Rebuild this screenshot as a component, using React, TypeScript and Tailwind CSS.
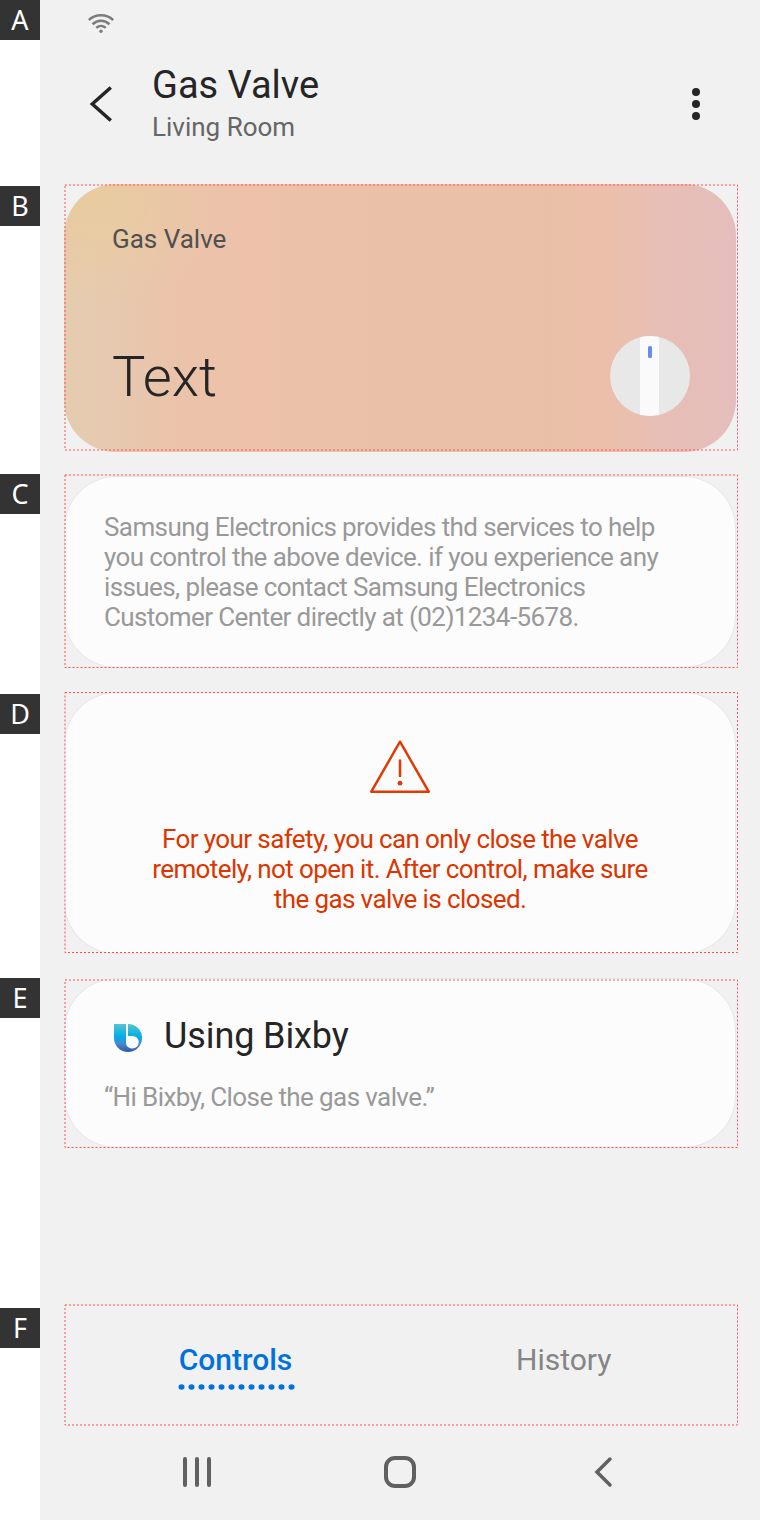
import type { ReactNode } from "react";

function Frame({ className, y = 1, height }: { className: string; y?: number; height: number }) {
  return (
    <svg className={"pointer-events-none absolute left-0 " + className} width="676" height={height + 4} fill="none">
      <rect x="1" y={y} width="672.5" height={height} stroke="#ff5050" strokeDasharray="2 2" />
    </svg>
  );
}

function Badge({ letter }: { letter: string }) {
  return (
    <div className="flex h-10 w-10 items-center justify-center bg-[#333333] font-['Noto_Sans',sans-serif] text-[27px] leading-10 text-white">
      {letter}
    </div>
  );
}

function Card({ className, children }: { className: string; children: ReactNode }) {
  return (
    <div className={"w-[672px] rounded-[52px] bg-[#fcfcfc] shadow-[inset_0_0_0_1px_#e6e6e6] " + className}>
      {children}
    </div>
  );
}

export default function App() {
  return (
    <div className="flex h-[1520px] w-[760px] bg-white font-[Roboto,sans-serif]">
      <aside className="flex w-10 flex-col">
        <Badge letter="A" />
        <div className="h-[146px]" />
        <Badge letter="B" />
        <div className="h-[248px]" />
        <Badge letter="C" />
        <div className="h-[180px]" />
        <Badge letter="D" />
        <div className="h-[244px]" />
        <Badge letter="E" />
        <div className="h-[290px]" />
        <Badge letter="F" />
      </aside>

      <main className="flex w-[720px] flex-col bg-[#f1f1f1] pl-6">
        <div className="h-12 pt-3 pl-6">
          <svg width="26" height="22" viewBox="0 0 26 22" fill="none" stroke="#7c7c7c" strokeWidth="2.600">
            <path d="M.8 8C7.800 1.700 18.200 1.700 25.200 8M4.500 12.200C9.500 7.500 16.500 7.500 21.500 12.200M8.300 15.900C11 13.300 15 13.300 17.700 15.900" />
            <circle cx="13" cy="19.300" r="1.700" fill="#7c7c7c" stroke="none" />
          </svg>
        </div>

        <header className="flex h-[136px] items-start pr-[60px]">
          <svg className="mt-[37px] ml-6" width="26" height="38" fill="none" stroke="#252525" strokeWidth="3.500">
            <path d="M22.800 2.500L4.300 19L22.800 35.500" />
          </svg>
          <div className="ml-[38px] flex-1 pt-3">
            <h1 className="text-[38px] leading-[50px] text-[#252525]">Gas Valve</h1>
            <p className="text-[26px] leading-[34px] text-[#666]">Living Room</p>
          </div>
          <svg className="mt-[38px]" width="8" height="36" fill="#252525">
            <circle cx="4" cy="6" r="4" />
            <circle cx="4" cy="18" r="4" />
            <circle cx="4" cy="30" r="4" />
          </svg>
        </header>

        <section className="relative h-[291px]">
          <div className="flex h-[268px] w-[672px] flex-col justify-between rounded-[52px] bg-[radial-gradient(ellipse_130px_110px_at_30px_15px,#e9cb9f_0%,#e9caa2b0_45%,#ebc5a600_100%),linear-gradient(90deg,#e4ccb0_0px,#e6c9b0_50px,#ebc3aa_110px,#edc1aa_180px,#eac1a8_330px,#eabfa7_490px,#ecbfab_545px,#e7bfb6_600px,#e5bdbc_672px)] pt-[38px] pr-[46px] pb-9 pl-12">
            <p className="text-[26px] leading-[34px] text-[#505050]">Gas Valve</p>
            <div className="flex items-end justify-between">
              <p className="text-[56px] leading-[78px] font-light text-[#252525]">Text</p>
              <svg width="80" height="80">
                <clipPath id="knob"><circle cx="40" cy="40" r="40" /></clipPath>
                <g clipPath="url(#knob)">
                  <rect width="80" height="80" fill="#e8e8e8" />
                  <rect x="30" width="19" height="80" fill="#fafafa" />
                </g>
                <rect x="38" y="10" width="4" height="12" rx="1.500" fill="#668cec" />
              </svg>
            </div>
          </div>
          <Frame className="top-0" height={265} />
        </section>

        <section className="relative h-[217px] pt-px">
          <Card className="h-[192px] pt-9 pl-10 text-[26px] leading-[30px] tracking-[-0.600px] text-[#999]">
            <p>Samsung Electronics provides thd services to help<br />you control the above device. if you experience any<br />issues, please contact Samsung Electronics<br />Customer Center directly at (02)1234-5678.</p>
          </Card>
          <Frame className="-top-px" height={192.500} />
        </section>

        <section className="relative h-[286px]">
          <Card className="flex h-[262px] flex-col items-center pt-12 text-center text-[26px] leading-[30px] tracking-[-0.600px] text-[#dc3500]">
            <svg width="60" height="54" fill="none" stroke="#e23a03" strokeWidth="2.500" strokeLinejoin="round">
              <path d="M30 1.700L58.700 51.700H1.300Z" />
              <path d="M30 19.500V37" />
              <circle cx="30" cy="43.200" r="2.400" fill="#e23a03" stroke="none" />
            </svg>
            <p className="mt-[30px]">For your safety, you can only close the valve<br />remotely, not open it. After control, make sure<br />the gas valve is closed.</p>
          </Card>
          <Frame className="top-0" y={0.5} height={260} />
        </section>

        <section className="relative h-[326px]">
          <Card className="h-[170px] pt-[33px] pl-10">
            <div className="flex h-[50px] items-start pl-[10px]">
              <svg className="mt-[13px]" width="28" height="28" viewBox="0 0 28 28">
                <linearGradient id="bixby" x1="0" y1="0" x2="0" y2="28" gradientUnits="userSpaceOnUse">
                  <stop stopColor="#55c5cb" />
                  <stop offset=".45" stopColor="#00aeea" />
                  <stop offset=".7" stopColor="#438bcc" />
                  <stop offset="1" stopColor="#3656a8" />
                </linearGradient>
                <path fill="url(#bixby)" fillRule="evenodd" d="M0 0H12V18A6 6 0 0 0 18.500 24.500A6.200 6.200 0 0 0 18.500 12H14V0A14 14 0 0 1 14 28A14 14 0 0 1 0 14Z" />
              </svg>
              <h2 className="ml-[22px] text-[36px] leading-[50px] tracking-[-0.100px] text-[#252525]">Using Bixby</h2>
            </div>
            <p className="mt-[21px] text-[26px] leading-[30px] tracking-[-0.600px] text-[#999]">“Hi Bixby, Close the gas valve.”</p>
          </Card>
          <Frame className="top-px" height={167.500} />
        </section>

        <nav className="relative flex h-[122px] pr-5 pt-9 text-[30px] leading-[40px]">
          <div className="ml-[113px] flex w-[120px] flex-col items-center">
            <span className="mr-[3px] font-medium text-[#0072de]">Controls</span>
            <svg width="118" height="6" fill="#0072de" className="mt-1">
              {Array.from({ length: 12 }, (_, i) => (
                <ellipse key={i} cx={3.5 + i * 10} cy="3" rx="3" ry="2.700" />
              ))}
            </svg>
          </div>
          <span className="ml-[219px] text-[#858585]">History</span>
          <Frame className="top-0" height={120} />
        </nav>

        <footer className="flex h-[94px] items-start pt-[30px] pl-[118px]">
          <svg width="30" height="32" stroke="#606060" strokeWidth="4" strokeLinecap="round">
            <path d="M3 3V29M15 3V29M27 3V29" />
          </svg>
          <svg className="ml-[172px]" width="32" height="32" fill="none" stroke="#606060" strokeWidth="4">
            <rect x="2" y="2" width="28" height="28" rx="9" />
          </svg>
          <svg className="ml-[177px]" width="22" height="32" fill="none" stroke="#606060" strokeWidth="3.500" strokeLinecap="round">
            <path d="M17 3L4 16L17 29" />
          </svg>
        </footer>
      </main>
    </div>
  );
}
